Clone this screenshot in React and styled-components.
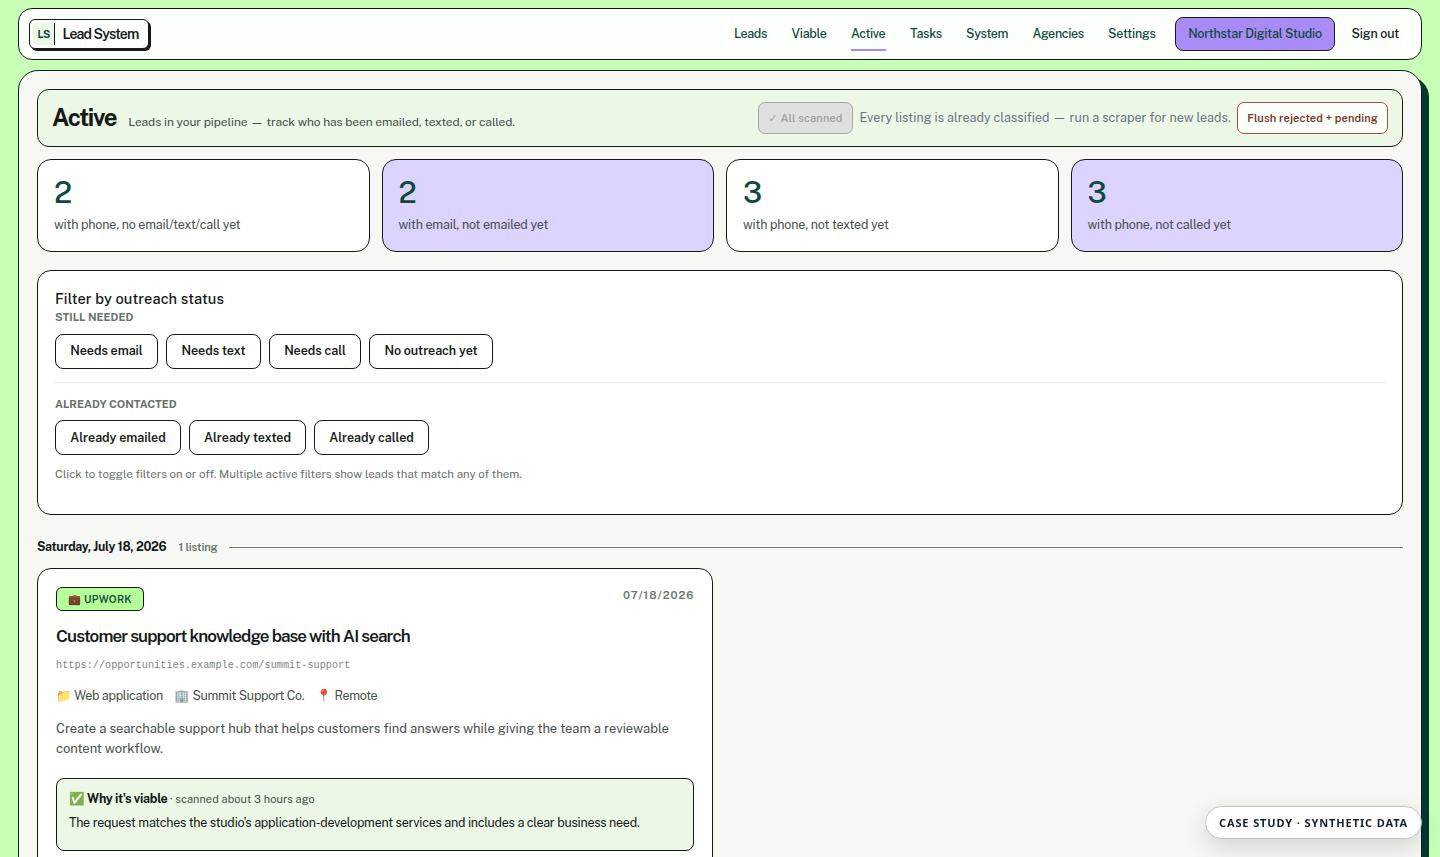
import React from 'react'
import styled, { createGlobalStyle, ThemeProvider } from 'styled-components'

const theme = {
	colors: {
		page: '#c6ffb5',
		paper: '#f7f8f3',
		white: '#ffffff',
		ink: '#141a17',
		green: '#0e4a3c',
		deep: '#06382f',
		mint: '#ecf7e6',
		lime: '#b5ff99',
		violet: '#a98bf5',
		lilac: '#ddd3ff',
		text: '#46504a',
		muted: '#69716b',
		slate: '#6b7680',
		danger: '#74372b',
		dangerLine: '#a34f45'
	}
}

const GlobalStyle = createGlobalStyle`
	*, *::before, *::after { box-sizing: border-box; }
	body {
		margin: 0;
		height: 857px;
		overflow: hidden;
		background: ${p => p.theme.colors.page};
		color: ${p => p.theme.colors.ink};
		font-family: "Public Sans", Inter, "Liberation Sans", sans-serif;
	}
	h1, h2, h3, p { margin: 0; }
	button { font-family: inherit; cursor: pointer; }
`

const Shell = styled.div`
	height: 857px;
	overflow: hidden;
	padding: 8px 18px 0;
`

const Nav = styled.nav`
	height: 52px;
	display: flex;
	align-items: center;
	justify-content: space-between;
	padding: 0 10px;
	background: #fdfffc;
	border: 1px solid ${p => p.theme.colors.ink};
	border-radius: 14px;
`

const Brand = styled.a`
	width: 120px;
	height: 30px;
	display: flex;
	align-items: center;
	padding-left: 3px;
	background: ${p => p.theme.colors.white};
	border: 1px solid ${p => p.theme.colors.ink};
	border-radius: 6px;
	box-shadow: 2px 2px 0 ${p => p.theme.colors.ink};
	font-size: 14px;
	font-weight: 600;
	letter-spacing: -0.87px;
	white-space: nowrap;
`

const Monogram = styled.span`
	width: 22px;
	height: 22px;
	margin-right: 7.5px;
	display: flex;
	align-items: center;
	justify-content: center;
	background: ${p => p.theme.colors.mint};
	border-right: 1px solid ${p => p.theme.colors.ink};
	border-radius: 3px 0 0 3px;
	color: ${p => p.theme.colors.green};
	font-size: 10.5px;
	font-weight: 700;
	letter-spacing: -0.8px;
`

const Links = styled.div`
	display: flex;
	align-items: center;
	gap: 24px;
	font-size: 12.5px;
	font-weight: 500;
	white-space: nowrap;
`

const NavLink = styled.a`
	width: ${p => p.$width}px;
	height: 34px;
	line-height: 34px;
	color: ${p => p.theme.colors.green};
	letter-spacing: ${p => p.$track}px;
	border-bottom: 2px solid ${p => p.$active ? p.theme.colors.violet : 'transparent'};
`

const Workspace = styled.a`
	width: 160px;
	height: 34px;
	margin-left: -5px;
	padding-left: 1px;
	line-height: 32px;
	text-align: center;
	background: ${p => p.theme.colors.violet};
	border: 1px solid ${p => p.theme.colors.ink};
	border-radius: 8px;
	color: ${p => p.theme.colors.green};
	letter-spacing: -0.24px;
`

const SignOut = styled.a`
	width: 59.5px;
	height: 34px;
	line-height: 33px;
	margin-left: -7px;
	letter-spacing: -0.15px;
`

const Panel = styled.main`
	height: 900px;
	margin-top: 10px;
	padding: 18px;
	background: ${p => p.theme.colors.paper};
	border: 1px solid ${p => p.theme.colors.ink};
	border-radius: 20px;
	box-shadow: 7px 7px 0 ${p => p.theme.colors.deep};
`

const Header = styled.header`
	height: 58px;
	display: flex;
	align-items: center;
	justify-content: space-between;
	padding: 0 14px;
	background: ${p => p.theme.colors.mint};
	border: 1px solid ${p => p.theme.colors.ink};
	border-radius: 12px;
`

const Heading = styled.div`
	display: flex;
	align-items: baseline;
	gap: 12px;
	padding-bottom: 2px;
`

const Title = styled.h1`
	font-size: 24px;
	line-height: 28px;
	font-weight: 700;
	letter-spacing: -1.3px;
`

const Subtitle = styled.p`
	font-size: 12px;
	letter-spacing: -0.09px;
	color: ${p => p.theme.colors.text};
`

const Actions = styled.div`
	display: flex;
	align-items: center;
	gap: 6.5px;
`

const ActionButton = styled.button`
	width: ${p => p.$width}px;
	height: 32px;
	padding: 0;
	background: #fdfffb;
	border: 1px solid ${p => p.theme.colors.dangerLine};
	border-radius: 7px;
	color: ${p => p.theme.colors.danger};
	font-size: 11px;
	font-weight: 600;
	letter-spacing: 0.12px;
	white-space: nowrap;
	&:disabled {
		background: #dedfde;
		border-color: #a2a7a2;
		color: #a1a4a1;
	}
`

const Tick = styled.span`
	font-family: "DejaVu Sans", sans-serif;
	font-size: 11px;
	font-weight: 700;
`

const Hint = styled.span`
	width: 371px;
	padding-bottom: 1px;
	font-size: 12.5px;
	letter-spacing: 0.03px;
	white-space: nowrap;
	color: ${p => p.theme.colors.slate};
`

const Stats = styled.section`
	display: grid;
	grid-template-columns: repeat(4, 1fr);
	gap: 12px;
	margin-top: 12px;
`

const Stat = styled.div`
	height: 93px;
	padding: 16px;
	background: ${p => p.$tinted ? p.theme.colors.lilac : p.theme.colors.white};
	border: 1px solid ${p => p.theme.colors.ink};
	border-radius: 14px;
`

const StatValue = styled.div`
	font-size: 30px;
	line-height: 32px;
	font-weight: 500;
	color: ${p => p.theme.colors.green};
`

const StatLabel = styled.div`
	margin-top: 8px;
	font-size: 12.5px;
	line-height: 18px;
	letter-spacing: -0.18px;
	color: ${p => p.theme.colors.text};
`

const Filters = styled.section`
	height: 245px;
	margin-top: 18px;
	padding: 18px 17px;
	background: ${p => p.theme.colors.white};
	border: 1px solid ${p => p.theme.colors.ink};
	border-radius: 14px;
`

const FilterTitle = styled.h2`
	font-size: 14.6px;
	line-height: 20px;
	font-weight: 500;
	letter-spacing: 0.1px;
`

const GroupLabel = styled.h3`
	font-size: 11px;
	line-height: 16px;
	font-weight: 700;
	text-transform: uppercase;
	color: ${p => p.theme.colors.muted};
`

const Chips = styled.div`
	display: flex;
	gap: 8px;
	margin-top: ${p => p.$top}px;
`

const Chip = styled.button`
	width: ${p => p.$width}px;
	height: 35px;
	padding: 0 0 1px;
	background: ${p => p.theme.colors.white};
	border: 1px solid ${p => p.theme.colors.ink};
	border-radius: 8px;
	color: ${p => p.theme.colors.ink};
	font-size: 12.5px;
	font-weight: 600;
	letter-spacing: -0.03px;
	white-space: nowrap;
`

const Divider = styled.hr`
	height: 1px;
	margin: 13.4px 0 13px;
	border: 0;
	background: #e9ebe8;
`

const FilterHelp = styled.p`
	margin-top: 9.6px;
	font-size: 11.5px;
	line-height: 18px;
	letter-spacing: -0.01px;
	color: ${p => p.theme.colors.muted};
`

const DayRow = styled.div`
	display: flex;
	align-items: center;
	margin-top: 23px;
	line-height: 18px;
	&::after {
		content: '';
		flex: 1;
		height: 1px;
		margin-left: 12px;
		background: #727873;
	}
`

const Day = styled.h2`
	width: 130px;
	font-size: 12.3px;
	font-weight: 700;
	letter-spacing: -0.3px;
	white-space: nowrap;
`

const Count = styled.span`
	width: 38.5px;
	margin-left: 11.5px;
	font-size: 11.3px;
	font-weight: 600;
	letter-spacing: -0.2px;
	white-space: nowrap;
	color: ${p => p.theme.colors.muted};
`

const Listings = styled.section`
	display: grid;
	grid-template-columns: 1fr 1fr;
	gap: 14px;
	margin-top: 12px;
`

const Card = styled.article`
	height: 420px;
	padding: 18px;
	background: ${p => p.theme.colors.white};
	border: 1px solid ${p => p.theme.colors.ink};
	border-radius: 14px;
`

const CardTop = styled.div`
	display: flex;
	justify-content: space-between;
`

const Source = styled.span`
	width: 88px;
	height: 24px;
	line-height: 23px;
	text-align: center;
	background: ${p => p.theme.colors.lime};
	border: 1px solid ${p => p.theme.colors.ink};
	border-radius: 6px;
	color: ${p => p.theme.colors.green};
	font-size: 10.4px;
	font-weight: 600;
	letter-spacing: 0.3px;
	white-space: nowrap;
`

const Posted = styled.time`
	height: 16px;
	line-height: 16px;
	font-size: 11.2px;
	font-weight: 600;
	letter-spacing: 0.95px;
	margin-right: -0.5px;
	color: ${p => p.theme.colors.muted};
`

const CardTitle = styled.h3`
	margin-top: 14px;
	font-size: 17px;
	line-height: 22px;
	font-weight: 600;
	letter-spacing: -0.92px;
`

const Url = styled.div`
	margin-top: 10px;
	font: 10.22px/17px "Liberation Mono", monospace;
	color: #7e847f;
`

const Meta = styled.div`
	display: flex;
	gap: 12px;
	margin-top: 12px;
	font-size: 12.5px;
	line-height: 20px;
	color: ${p => p.theme.colors.text};
`

const MetaItem = styled.span`
	width: ${p => p.$width}px;
	letter-spacing: -0.29px;
	white-space: nowrap;
`

const Summary = styled.p`
	margin-top: 13px;
	font-size: 13px;
	line-height: 20px;
	letter-spacing: -0.04px;
	color: ${p => p.theme.colors.text};
`

const Verdict = styled.div`
	height: 73px;
	margin-top: 19px;
	padding: 11px 12px;
	background: ${p => p.theme.colors.mint};
	border: 1px solid ${p => p.theme.colors.ink};
	border-radius: 8px;
`

const VerdictHead = styled.div`
	font-size: 12.5px;
	line-height: 18px;
	font-weight: 700;
	letter-spacing: -0.28px;
	small {
		font-size: 11px;
		font-weight: 400;
		letter-spacing: 0.06px;
		color: ${p => p.theme.colors.text};
	}
`

const VerdictText = styled.p`
	margin-top: 5px;
	font-size: 12.5px;
	line-height: 20px;
	letter-spacing: -0.25px;
	white-space: nowrap;
`

const DemoTag = styled.div`
	position: fixed;
	right: 18px;
	bottom: 18px;
	width: 217px;
	height: 33px;
	line-height: 32px;
	padding-left: 13px;
	background: ${p => p.theme.colors.white};
	border: 1px solid #bfc1c9;
	border-radius: 17px;
	box-shadow: 0 8px 24px rgba(15, 23, 42, 0.16);
	color: #172033;
	font-family: "Noto Sans", sans-serif;
	font-size: 11px;
	font-weight: 700;
	letter-spacing: 0.88px;
	white-space: nowrap;
`

const links = [
	{label: 'Leads', width: 33.5, track: -0.4},
	{label: 'Viable', width: 35.5, track: -0.27},
	{label: 'Active', width: 35, track: -0.4, active: true},
	{label: 'Tasks', width: 32, track: -0.3},
	{label: 'System', width: 42.5, track: -0.35},
	{label: 'Agencies', width: 51.5, track: -0.36},
	{label: 'Settings', width: 47.5, track: -0.18}
]

const stats = [
	{value: 2, label: 'with phone, no email/text/call yet'},
	{value: 2, label: 'with email, not emailed yet', tinted: true},
	{value: 3, label: 'with phone, not texted yet'},
	{value: 3, label: 'with phone, not called yet', tinted: true}
]

const needed = [['Needs email', 103], ['Needs text', 95], ['Needs call', 92], ['No outreach yet', 124]]
const contacted = [['Already emailed', 126], ['Already texted', 117], ['Already called', 115]]

const ChipGroup = ({items, top}) => (
	<Chips $top={top}>
		{items.map(([label, width]) => <Chip key={label} $width={width}>{label}</Chip>)}
	</Chips>
)

const App = () => (
	<ThemeProvider theme={theme}>
		<GlobalStyle/>
		<Shell>
			<Nav>
				<Brand><Monogram>LS</Monogram>Lead System</Brand>
				<Links>
					{links.map(l => (
						<NavLink key={l.label} $width={l.width} $track={l.track} $active={l.active}>{l.label}</NavLink>
					))}
					<Workspace>Northstar Digital Studio</Workspace>
					<SignOut>Sign out</SignOut>
				</Links>
			</Nav>
			<Panel>
				<Header>
					<Heading>
						<Title>Active</Title>
						<Subtitle>Leads in your pipeline — track who has been emailed, texted, or called.</Subtitle>
					</Heading>
					<Actions>
						<ActionButton $width={95} disabled><Tick>✓</Tick> All scanned</ActionButton>
						<Hint>Every listing is already classified — run a scraper for new leads.</Hint>
						<ActionButton $width={151}>Flush rejected + pending</ActionButton>
					</Actions>
				</Header>
				<Stats>
					{stats.map(s => (
						<Stat key={s.label} $tinted={s.tinted}>
							<StatValue>{s.value}</StatValue>
							<StatLabel>{s.label}</StatLabel>
						</Stat>
					))}
				</Stats>
				<Filters>
					<FilterTitle>Filter by outreach status</FilterTitle>
					<GroupLabel>Still needed</GroupLabel>
					<ChipGroup items={needed} top={8.6}/>
					<Divider/>
					<GroupLabel>Already contacted</GroupLabel>
					<ChipGroup items={contacted} top={8.4}/>
					<FilterHelp>Click to toggle filters on or off. Multiple active filters show leads that match any of them.</FilterHelp>
				</Filters>
				<DayRow>
					<Day>Saturday, July 18, 2026</Day>
					<Count>1 listing</Count>
				</DayRow>
				<Listings>
					<Card>
						<CardTop>
							<Source>💼 UPWORK</Source>
							<Posted>07/18/2026</Posted>
						</CardTop>
						<CardTitle>Customer support knowledge base with AI search</CardTitle>
						<Url>https://opportunities.example.com/summit-support</Url>
						<Meta>
							<MetaItem $width={106}>📁 Web application</MetaItem>
							<MetaItem $width={130}>🏢 Summit Support Co.</MetaItem>
							<MetaItem $width={60}>📍 Remote</MetaItem>
						</Meta>
						<Summary>
							Create a searchable support hub that helps customers find answers while giving the team a reviewable content workflow.
						</Summary>
						<Verdict>
							<VerdictHead>✅ Why it's viable <small>· scanned about 3 hours ago</small></VerdictHead>
							<VerdictText>The request matches the studio's application-development services and includes a clear business need.</VerdictText>
						</Verdict>
					</Card>
				</Listings>
			</Panel>
		</Shell>
		<DemoTag>CASE STUDY · SYNTHETIC DATA</DemoTag>
	</ThemeProvider>
)

export default App
